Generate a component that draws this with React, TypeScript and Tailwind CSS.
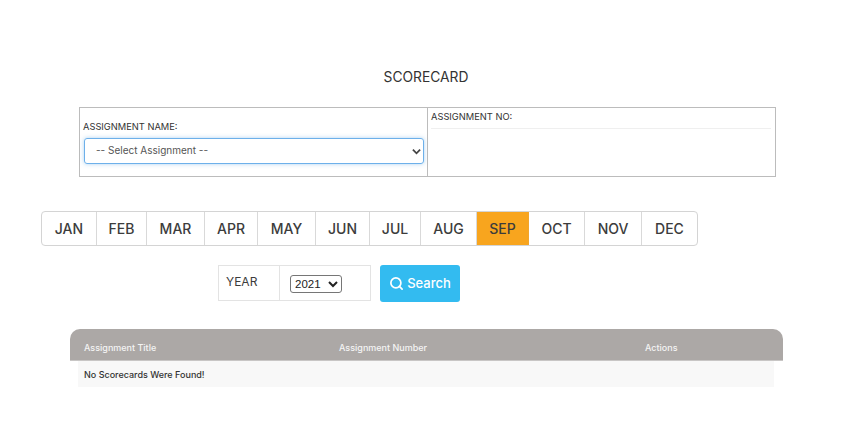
import React from "react";
import { Search } from "lucide-react";

const months = [
  { name: "JAN", width: "w-[55px]" },
  { name: "FEB", width: "w-[50px]" },
  { name: "MAR", width: "w-[58px]" },
  { name: "APR", width: "w-[53px]" },
  { name: "MAY", width: "w-[58px]" },
  { name: "JUN", width: "w-[54px]" },
  { name: "JUL", width: "w-[51px]" },
  { name: "AUG", width: "w-[56px]" },
  { name: "SEP", width: "w-[52px]" },
  { name: "OCT", width: "w-[56px]" },
  { name: "NOV", width: "w-[57px]" },
  { name: "DEC", width: "w-[55px]" },
];

export default function App() {
  return (
    <div className="w-[852px] h-[444px] bg-white overflow-hidden font-['Inter',sans-serif] text-[#3c3c3c] pt-[69px]">
      <h1 className="text-center text-[13.8px] leading-[16px] text-[#333333]">SCORECARD</h1>

      <div className="ml-[79px] mt-[22px] w-[697px] h-[70px] border border-[#bcbcbc] flex">
        <div className="w-[348px] border-r border-[#bcbcbc] pl-[3px] pt-[13px]">
          <label className="block text-[9.3px] leading-[12px] text-[#333333]">ASSIGNMENT NAME:</label>
          <div className="relative mt-[5px] ml-px w-[340px] h-[26px] rounded-[3px] border border-[#6db0ea] shadow-[0_0_4px_rgba(95,168,230,0.5)]">
            <select className="block w-full h-[23px] appearance-none bg-transparent pl-[11px] text-[10px] text-[#555555] outline-none">
              <option>-- Select Assignment --</option>
            </select>
            <svg className="absolute right-[2px] top-[8px] w-[9px] h-[9px] pointer-events-none" viewBox="0 0 10 10" fill="none" stroke="#444444" strokeWidth="2">
              <path d="M1 3l4 4 4-4" />
            </svg>
          </div>
        </div>
        <div className="flex-1 pl-[3px] pt-[3px]">
          <label className="block text-[9.3px] leading-[12px] text-[#333333]">ASSIGNMENT NO:</label>
          <div className="mt-[5px] mr-[4px] h-px bg-[#efefef]" />
        </div>
      </div>

      <div className="ml-[41px] mt-[34px] w-fit h-[35px] flex border border-[#d4d4d4] rounded-[4px]">
        {months.map((m) => (
          <div
            key={m.name}
            className={`${m.width} flex items-center justify-center text-[14px] font-medium border-r border-[#d9d9d9] last:border-r-0 ${
              m.name === "SEP" ? "bg-[#f8a51e] border-[#f1a52c]" : ""
            }`}
          >
            {m.name}
          </div>
        ))}
      </div>

      <div className="ml-[218px] mt-[19px] flex items-start">
        <div className="w-[153px] h-[36px] border border-[#e3e3e3] flex">
          <div className="w-[61px] border-r border-[#e3e3e3] pl-[7px] pt-[8px] text-[12px] leading-[15px]">YEAR</div>
          <div className="flex-1 pl-[10px] pt-[9px]">
            <select className="block w-[52px] h-[18px] border border-[#767676] rounded-[3px] bg-white text-[11.5px] text-[#222222] font-['Liberation_Sans',sans-serif]">
              <option>2021</option>
            </select>
          </div>
        </div>
        <button className="ml-[9px] w-[80px] h-[37px] rounded-[3px] bg-[#33bbf0] text-white text-[13px] font-medium flex items-center justify-center gap-[3px]">
          <Search size={15} strokeWidth={2.75} />
          Search
        </button>
      </div>

      <div className="ml-[70px] mt-[27px] w-[713px]">
        <div className="h-[32px] bg-[#aca8a6] rounded-t-[10px] border-b border-[#c8c6c5] pt-[6px] flex items-center text-[#f4f4f4] text-[9px] font-medium">
          <div className="w-[256px] pl-[14px]">Assignment Title</div>
          <div className="w-[305px] pl-[13px]">Assignment Number</div>
          <div className="pl-[14px]">Actions</div>
        </div>
        <div className="ml-[8px] w-[696px] h-[26px] bg-[#f8f8f8] pl-[6px] pt-[2px] flex items-center text-[9px] font-medium text-[#333333]">
          No Scorecards Were Found!
        </div>
      </div>
    </div>
  );
}
